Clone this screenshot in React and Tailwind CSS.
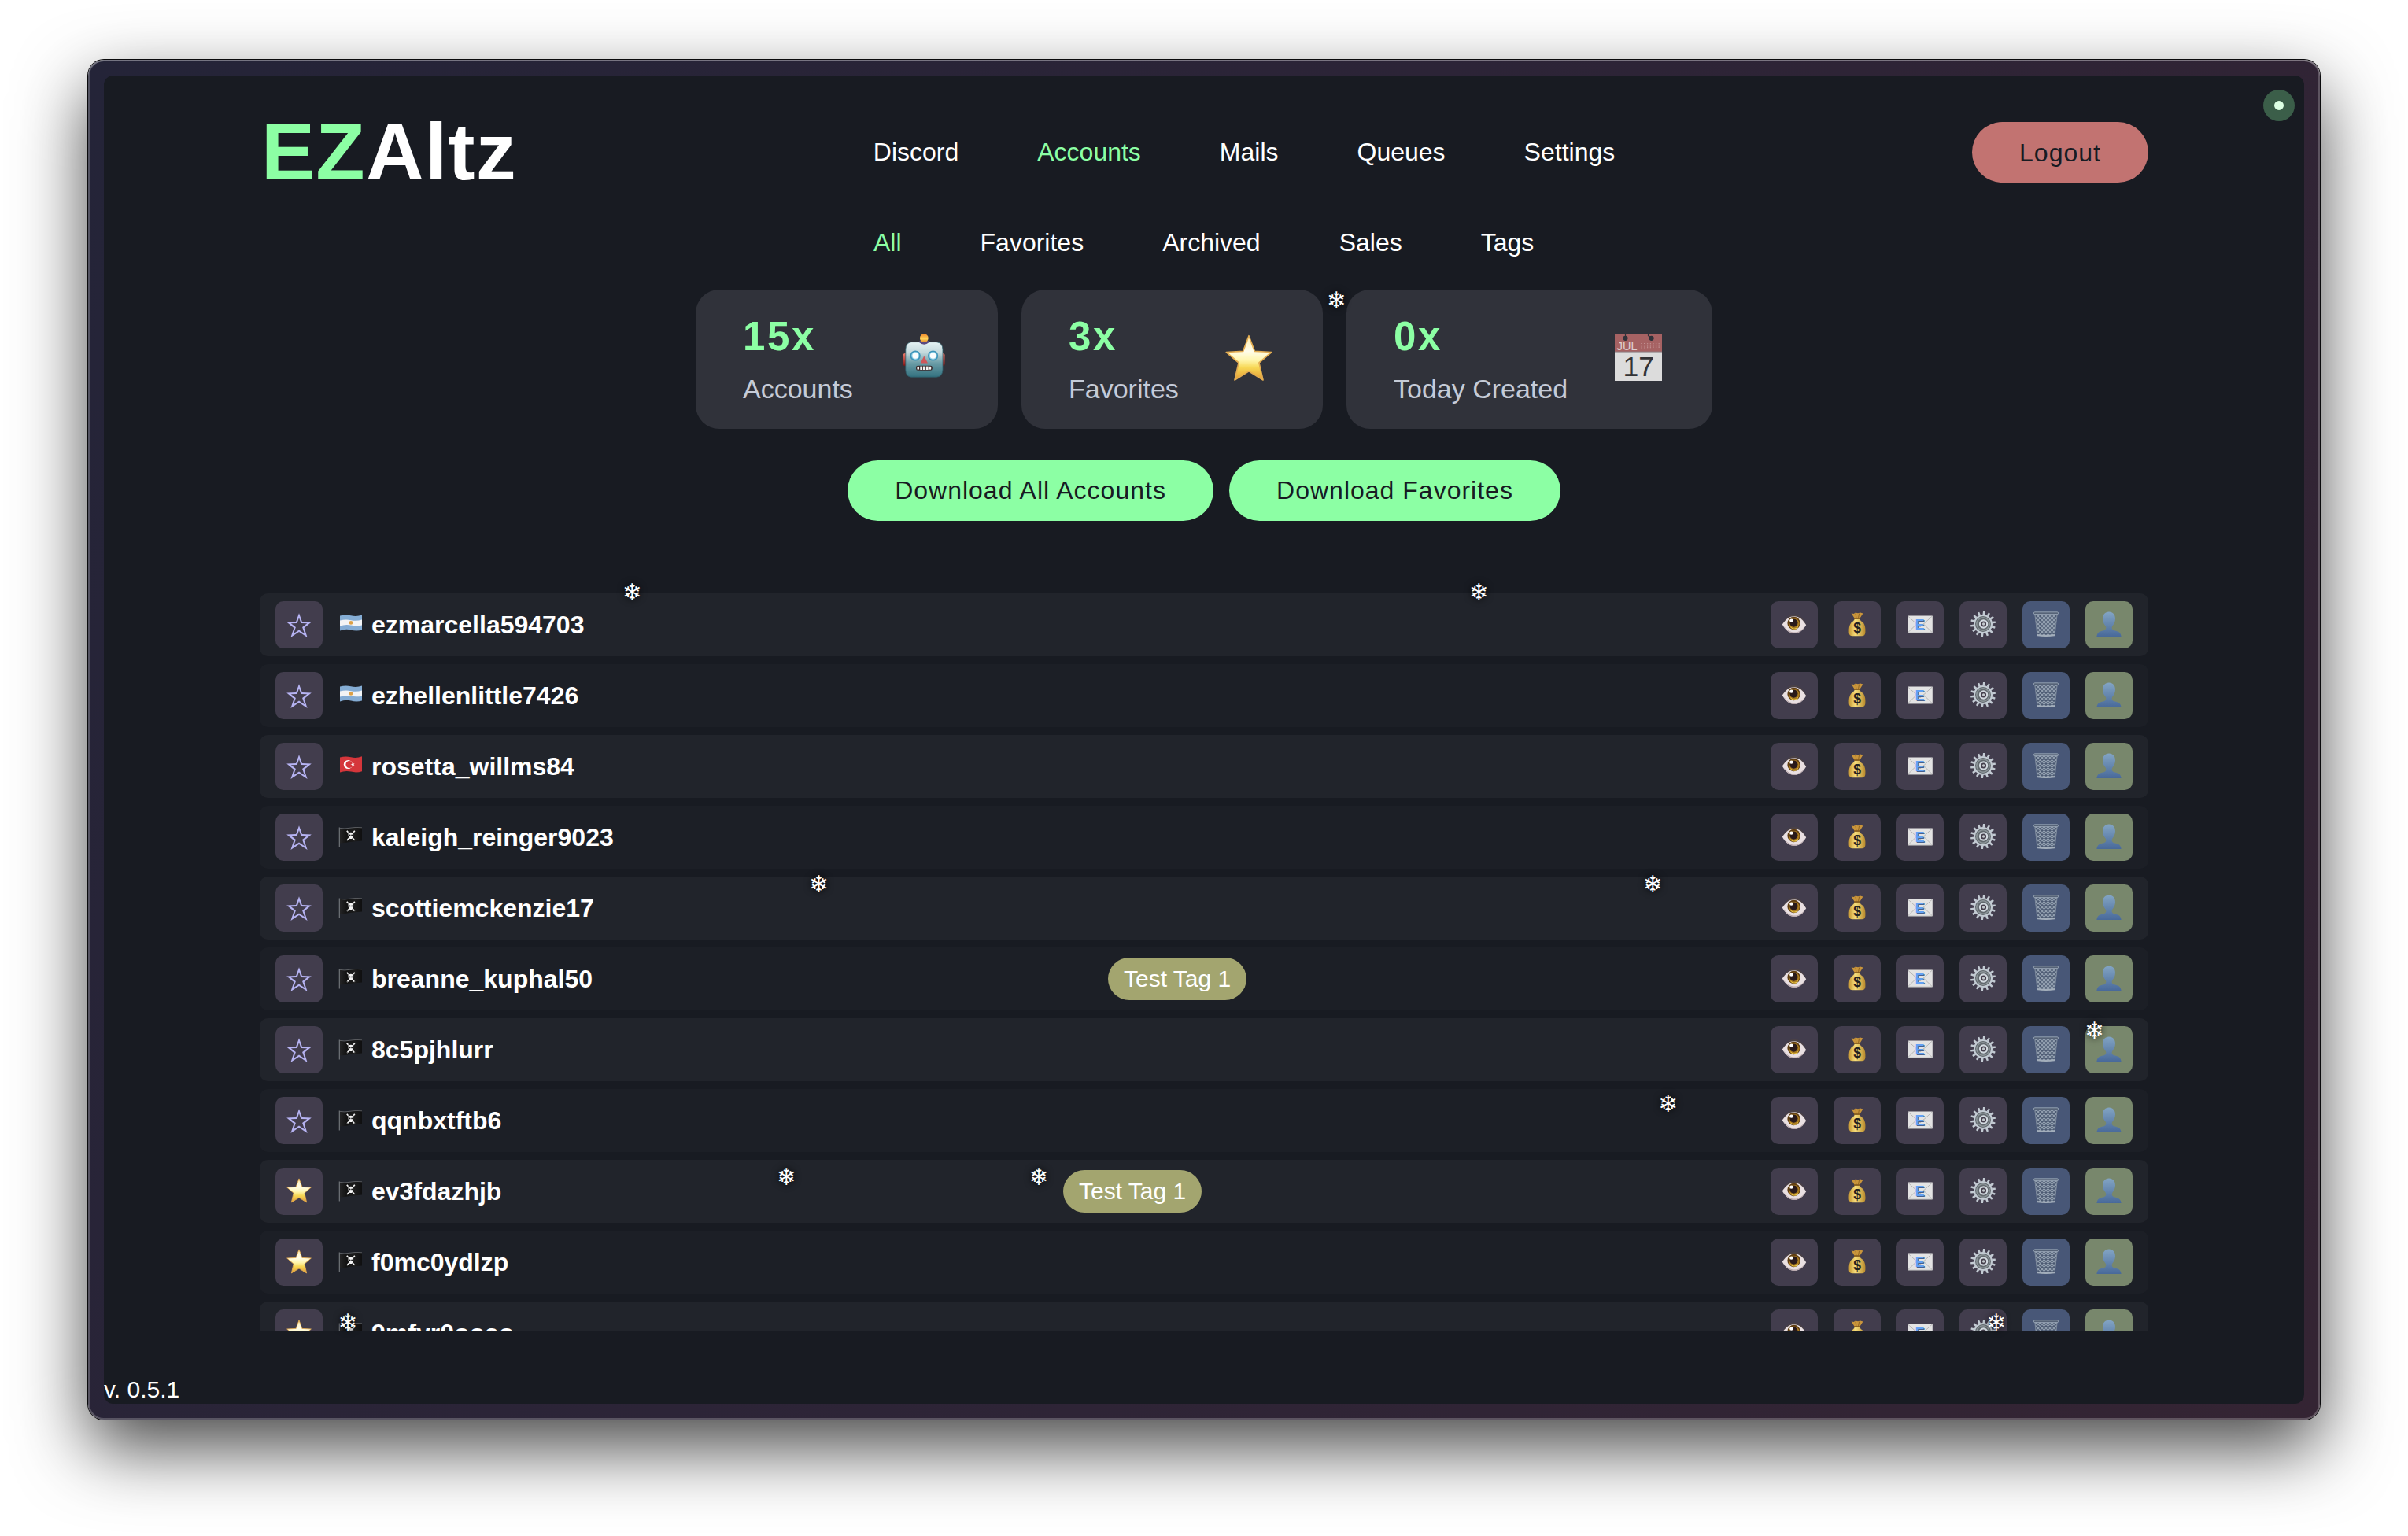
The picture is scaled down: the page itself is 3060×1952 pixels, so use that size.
import React from "react";

function StarIcon({ className, id }) {
  return (
    <svg viewBox="0 0 32 32" className={className}>
      <defs>
        <linearGradient id={id} x1="0" y1="0" x2="0" y2="1">
          <stop offset="0" stopColor="#fdeeb0" />
          <stop offset="0.35" stopColor="#fffdea" />
          <stop offset="0.55" stopColor="#fff6ae" />
          <stop offset="0.72" stopColor="#f7d855" />
          <stop offset="1" stopColor="#e39a33" />
        </linearGradient>
      </defs>
      <polygon
        points="16,0.9 19.9,11.4 31.3,12 22.9,19.2 25.6,30.9 16,25 6.4,30.9 9.1,19.2 0.7,12 12.1,11.4"
        fill={`url(#${id})`}
        stroke="#e3ad52"
        strokeWidth="0.9"
        strokeLinejoin="round"
      />
    </svg>
  );
}

function StarOutline({ className }) {
  return (
    <svg viewBox="0 0 32 32" className={className}>
      <path
        fillRule="evenodd"
        fill="#b6b3f2"
        d="M16 0.2 19.9 11.1 31.8 11.5 22.6 18.9 26.6 30.9 16 23.9 5.4 30.9 9.4 18.9 0.2 11.5 12.1 11.1Z M16 6 13.6 13 5.8 13.2 11.9 18 9 26.2 16 21.5 23 26.2 20.1 18 26.2 13.2 18.4 13Z"
      />
    </svg>
  );
}

function Robot() {
  return (
    <svg viewBox="0 0 60 60" className="size-[60px]">
      <defs>
        <linearGradient id="rb-head" x1="0" y1="0" x2="0" y2="1">
          <stop offset="0" stopColor="#e6f3f4" />
          <stop offset="0.3" stopColor="#c3d9dc" />
          <stop offset="0.6" stopColor="#6b9ca6" />
          <stop offset="1" stopColor="#33717f" />
        </linearGradient>
        <linearGradient id="rb-ball" x1="0" y1="0" x2="0" y2="1">
          <stop offset="0" stopColor="#f08a2c" />
          <stop offset="0.6" stopColor="#ffd45a" />
          <stop offset="1" stopColor="#e08a2c" />
        </linearGradient>
        <linearGradient id="rb-ear" x1="0" y1="0" x2="0" y2="1">
          <stop offset="0" stopColor="#f07a6a" />
          <stop offset="1" stopColor="#7d1414" />
        </linearGradient>
      </defs>
      <rect x="3.6" y="25" width="8" height="16" rx="2.5" fill="url(#rb-ear)" />
      <rect x="48.6" y="25" width="8" height="16" rx="2.5" fill="url(#rb-ear)" />
      <ellipse cx="30.3" cy="11" rx="6.4" ry="3.4" fill="#5b4a80" />
      <rect x="25" y="0.6" width="10.6" height="10" rx="4.6" fill="url(#rb-ball)" />
      <path
        d="M14 10.6H46Q53.8 11.6 54 20V46Q53.6 54.8 46 55.2H14Q7 54.8 6.8 46V20Q7 11.6 14 10.6Z"
        fill="url(#rb-head)"
        stroke="#2f5d69"
        strokeWidth="0.8"
      />
      <path d="M24 11Q30.3 16.5 36.6 11Z" fill="#5b4a80" />
      <circle cx="19.2" cy="28" r="6.6" fill="#3d93b8" />
      <circle cx="19.2" cy="28" r="5" fill="#8fd0e6" />
      <circle cx="19.2" cy="28" r="3.8" fill="#fafdfd" />
      <circle cx="41.6" cy="28" r="6.6" fill="#3d93b8" />
      <circle cx="41.6" cy="28" r="5" fill="#8fd0e6" />
      <circle cx="41.6" cy="28" r="3.8" fill="#fafdfd" />
      <polygon points="30.3,28.5 35,37.6 25.6,37.6" fill="#d0575a" />
      <rect x="20" y="40.8" width="20.8" height="6" rx="2.4" fill="#3a2a2c" />
      <g fill="#f4f4f2">
        <rect x="21.4" y="41.8" width="2.6" height="4" rx="1" />
        <rect x="25.3" y="41.6" width="2.8" height="4.4" />
        <rect x="29" y="41.6" width="2.8" height="4.4" />
        <rect x="32.8" y="41.6" width="2.8" height="4.4" />
        <rect x="36.6" y="41.8" width="2.6" height="4" rx="1" />
      </g>
    </svg>
  );
}

function Calendar() {
  return (
    <svg viewBox="0 0 60 60" className="size-[60px] overflow-visible">
      <rect width="60" height="60" fill="#dcdcdc" />
      <rect width="60" height="23" fill="#a66263" />
      <rect y="22.6" width="60" height="1" fill="#8d8084" />
      <g fill="#30323a">
        <circle cx="13.5" cy="5.8" r="3.1" />
        <circle cx="46.6" cy="5.8" r="3.1" />
      </g>
      <path d="M13.5 0V5M42.5 0V2.6L46.6 5" stroke="#30323a" strokeWidth="1.2" fill="none" />
      <g stroke="#c79a9b" strokeWidth="1.3" strokeDasharray="1.1 1.1">
        <path d="M34 12V20.5M37.8 12V20.5M41.6 10V20.5M45.4 10V20.5M49 10V18.5M52.6 10V18.5M56.2 10V18.5" />
      </g>
      <text x="2.8" y="20.8" fontSize="14.5" fill="#dfcfd0" fontFamily="Liberation Sans, sans-serif">
        JUL
      </text>
      <text x="10.4" y="54" fontSize="35.5" fill="#333436" fontFamily="Liberation Sans, sans-serif">
        17
      </text>
    </svg>
  );
}

function Eye() {
  return (
    <svg viewBox="0 0 32 32" className="size-8">
      <path d="M1 15.4C6 7 10 3.8 16.4 3.8C23 3.8 27 8 31.2 16.8L28 17C20 9 10 9 3 17Z" fill="#4a4146" />
      <path d="M0.8 16.4C6 9 10 6.2 16 6.2C22.4 6.2 26.4 10 31.2 17.2C27 24.6 22 27.8 16.6 27.8C10 27.8 4.6 23.6 0.8 16.4Z" fill="#e9e0e2" />
      <path d="M2.4 17.4C6 23.4 11 26.6 16.6 26.6C21.6 26.6 26 24 30 18C26 25.2 21.6 27.8 16.6 27.8C10.6 27.8 5.6 24 2.4 17.4Z" fill="#b9a6aa" />
      <circle cx="15.6" cy="15" r="8.2" fill="#5e3c10" />
      <circle cx="15.8" cy="15.6" r="6.9" fill="#a97a20" />
      <path d="M11 19Q16 24.6 21.4 18.4Q20 22.6 16 22.6Q12.4 22.6 11 19Z" fill="#f0cf4a" />
      <circle cx="15.4" cy="14.6" r="5.1" fill="#2a1a1a" />
      <circle cx="12.4" cy="11.6" r="2.2" fill="#fff" />
    </svg>
  );
}

function MoneyBag() {
  return (
    <svg viewBox="0 0 32 32" className="size-8">
      <defs>
        <linearGradient id="bag" x1="0" y1="0" x2="1" y2="0">
          <stop offset="0" stopColor="#c99a35" />
          <stop offset="0.4" stopColor="#f7df7d" />
          <stop offset="1" stopColor="#b98b2c" />
        </linearGradient>
      </defs>
      <path d="M8.6 2.2 11.5 3 14 1.4 17 2.2 20 1.4 23.4 2.6 19 9.4H13Z" fill="#c9953b" />
      <path d="M14 2.6 15 9M18.6 2.6 17.4 9" stroke="#8a6020" strokeWidth="0.9" />
      <path d="M13 9.4H19Q20 12 24 14.4Q27 19 26.4 27Q26 31.2 22 31.2H10Q5.8 31.2 5.6 27Q5 19 8.2 14.4Q12 12 13 9.4Z" fill="url(#bag)" />
      <path d="M12 9H20" stroke="#8a5f1f" strokeWidth="1.8" />
      <text x="16" y="27.4" fontSize="17.5" fontWeight="700" textAnchor="middle" fill="#222" fontFamily="Liberation Sans, sans-serif">
        $
      </text>
    </svg>
  );
}

function Envelope() {
  return (
    <svg viewBox="0 0 32 32" className="size-8">
      <rect x="0.2" y="5.6" width="31.6" height="21.6" rx="0.8" fill="#e3e3e3" />
      <path d="M0.6 26.8 12 15.6M31.4 26.8 20 15.6M0.6 6 16 20 31.4 6" stroke="#b5b5b5" strokeWidth="1" fill="none" />
      <path d="M0.6 27H31.4" stroke="#bdbdbd" strokeWidth="0.8" />
      <text x="16.6" y="23.6" fontSize="18" fontWeight="700" textAnchor="middle" fill="#46608c" fontFamily="Liberation Sans, sans-serif">
        E
      </text>
      <text x="15.6" y="22.6" fontSize="18" fontWeight="700" textAnchor="middle" fill="#62a0f4" fontFamily="Liberation Sans, sans-serif">
        E
      </text>
    </svg>
  );
}

const TEETH = Array.from({ length: 14 }, (_, i) => (i * 360) / 14);

function Gear() {
  return (
    <svg viewBox="0 0 32 32" className="size-8">
      <g fill="#c3cbd3">
        {TEETH.map((a) => (
          <path key={a} d="M14.6 4.4 14.9 0H17.2L17.4 4.4Z" transform={`rotate(${a + 4} 16 16)`} />
        ))}
      </g>
      <circle cx="16" cy="16" r="11" fill="#62696e" stroke="#c3cbd3" strokeWidth="2" />
      <circle cx="16" cy="16" r="8.2" fill="none" stroke="#8d969a" strokeWidth="1.6" />
      <circle cx="16.6" cy="16" r="4.6" fill="#453f4c" stroke="#d3dae0" strokeWidth="2.2" />
      <circle cx="16.6" cy="16" r="1.7" fill="#c2c8cc" />
    </svg>
  );
}

function Trash() {
  return (
    <svg viewBox="0 0 32 32" className="size-8">
      <defs>
        <clipPath id="basket">
          <path d="M1.4 2H30.6L27 30.6Q16 32.4 5 30.6Z" />
        </clipPath>
      </defs>
      <g clipPath="url(#basket)">
        <rect width="32" height="32" fill="#4c5a72" />
        <path
          d="M-20 0 12 32M-15 0 17 32M-10 0 22 32M-5 0 27 32M0 0 32 32M5 0 37 32M10 0 42 32M15 0 47 32M20 0 52 32M25 0 57 32M52 0 20 32M47 0 15 32M42 0 10 32M37 0 5 32M32 0 0 32M27 0 -5 32M22 0 -10 32M17 0 -15 32M12 0 -20 32M7 0 -25 32"
          stroke="#93a0b0"
          strokeWidth="1.1"
        />
      </g>
      <path d="M1.8 3 5 30.6M30.2 3 27 30.6" stroke="#7d8a9c" strokeWidth="1" />
      <rect x="0.4" y="0.8" width="31.2" height="2.8" rx="1.4" fill="#566377" stroke="#9ba8b8" strokeWidth="0.9" />
      <path d="M4.8 29Q16 30.8 27.2 29L27 31.2Q16 32.6 5 31.2Z" fill="#a3aebb" />
    </svg>
  );
}

function Person() {
  return (
    <svg viewBox="0 0 32 32" className="size-8">
      <defs>
        <linearGradient id="person" x1="0" y1="0" x2="0" y2="1">
          <stop offset="0" stopColor="#83a5c4" />
          <stop offset="1" stopColor="#48699a" />
        </linearGradient>
      </defs>
      <path
        d="M16 0.4C21 0.4 24 4 24 9.4C24 13.4 22 16.2 20.4 18.4C19 20.6 19.6 23.2 22.4 24.2C26.6 25 31 25.8 31.6 32H0.4C1 25.8 5.4 25 9.6 24.2C12.4 23.2 13 20.6 11.6 18.4C10 16.2 8 13.4 8 9.4C8 4 11 0.4 16 0.4Z"
        fill="url(#person)"
      />
    </svg>
  );
}

function FlagArgentina() {
  return (
    <svg viewBox="0 0 30 26" className="h-[26px] w-[30px]">
      <path d="M2 1.6Q9 -0.6 16 1.2T30 0.6V19.6Q23 21.6 16 19.6T2 20.6Z" fill="#84acd4" />
      <path d="M2 7.6Q9 5.8 16 7.2T30 6.6V13.4Q23 15.2 16 13.6T2 14.6Z" fill="#f3f4f5" />
      <circle cx="16" cy="10.4" r="2.3" fill="#dba047" />
    </svg>
  );
}

function FlagTurkey() {
  return (
    <svg viewBox="0 0 30 26" className="h-[26px] w-[30px]">
      <path d="M2 1.6Q9 -0.6 16 1.2T30 0.2V19.2Q23 21.4 16 19.6T2 20.6Z" fill="#d5363b" />
      <circle cx="12.4" cy="10.5" r="5.6" fill="#fff" />
      <circle cx="13.9" cy="10.5" r="4.5" fill="#d5363b" />
      <polygon points="15.4,10.4 17.4,9.9 17.8,8 18.8,9.6 20.6,9.2 19.4,10.5 20.4,12 18.7,11.4 17.4,12.8 17.4,11" fill="#fff" />
    </svg>
  );
}

function FlagPirate() {
  return (
    <svg viewBox="0 0 30 26" className="h-[26px] w-[30px]">
      <defs>
        <linearGradient id="pirate" x1="0" y1="0" x2="1" y2="0">
          <stop offset="0" stopColor="#242425" />
          <stop offset="0.3" stopColor="#131313" />
          <stop offset="0.7" stopColor="#1c1c1c" />
          <stop offset="1" stopColor="#0f0f10" />
        </linearGradient>
      </defs>
      <path d="M1.8 1.6Q8 2.8 15 1.4T30 0.8V17.4Q22 18 15 19T1.8 20.6Z" fill="url(#pirate)" />
      <path d="M1.8 1.4Q8 2.6 15 1.2T30 0.8" stroke="#6a6c70" strokeWidth="0.8" fill="none" />
      <path d="M1.3 0.4V25.4" stroke="#777b80" strokeWidth="1.1" />
      <path d="M10.8 4.8 20.6 17M20.8 4.8 11 17.2" stroke="#f2f2f2" strokeWidth="1.7" strokeDasharray="2.6 0.5" />
      <circle cx="15.8" cy="10" r="3.3" fill="#f4f4f4" />
      <rect x="14.1" y="12" width="3.4" height="3" fill="#f4f4f4" />
      <circle cx="14.6" cy="10.4" r="0.9" fill="#111" />
      <circle cx="17.1" cy="10.4" r="0.9" fill="#111" />
    </svg>
  );
}

const FLAGS = { ar: FlagArgentina, tr: FlagTurkey, pirate: FlagPirate };

const ACCOUNTS = [
  { name: "ezmarcella594703", flag: "ar" },
  { name: "ezhellenlittle7426", flag: "ar" },
  { name: "rosetta_willms84", flag: "tr" },
  { name: "kaleigh_reinger9023", flag: "pirate" },
  { name: "scottiemckenzie17", flag: "pirate" },
  { name: "breanne_kuphal50", flag: "pirate", tag: "Test Tag 1", lead: "w-[1058px]" },
  { name: "8c5pjhlurr", flag: "pirate" },
  { name: "qqnbxtftb6", flag: "pirate" },
  { name: "ev3fdazhjb", flag: "pirate", fav: true, tag: "Test Tag 1", lead: "w-[1001px]" },
  { name: "f0mc0ydlzp", flag: "pirate", fav: true },
  { name: "9mfyr0ooao", flag: "pirate", fav: true },
];

const ACTIONS = [
  { Icon: Eye, bg: "bg-[#423d4d]" },
  { Icon: MoneyBag, bg: "bg-[#423d4d]" },
  { Icon: Envelope, bg: "bg-[#423d4d]" },
  { Icon: Gear, bg: "bg-[#423d4d]" },
  { Icon: Trash, bg: "bg-[#485777]" },
  { Icon: Person, bg: "bg-[#78876c]" },
];

function AccountRow({ account, index }) {
  const Flag = FLAGS[account.flag];
  return (
    <div
      className={`flex h-20 shrink-0 items-center rounded-[10px] px-5 ${
        index % 2 === 0 ? "bg-[#21242b]" : "bg-[#1c1f26]"
      }`}
    >
      <div className={`flex shrink-0 items-center ${account.lead || ""}`}>
        <button className="flex size-[60px] items-center justify-center rounded-[10px] bg-[#423d4d]">
          {account.fav ? (
            <StarIcon className="mb-[2px] size-8" id={`star-${index}`} />
          ) : (
            <StarOutline className="mt-[2px] size-8" />
          )}
        </button>
        <span className="ml-5 flex pb-px">
          <Flag />
        </span>
        <span className="ml-3 pb-px text-[32px] font-bold leading-[38px] text-white">{account.name}</span>
      </div>
      {account.tag && (
        <span className="flex h-[54px] items-center rounded-[27px] bg-[#a3a56f] px-5 pb-px text-[30px] leading-[34px] text-white">
          {account.tag}
        </span>
      )}
      <div className="ml-auto flex gap-5">
        {ACTIONS.map(({ Icon, bg }, i) => (
          <button key={i} className={`flex size-[60px] items-center justify-center rounded-[10px] pb-[2px] ${bg}`}>
            <Icon />
          </button>
        ))}
      </div>
    </div>
  );
}

function StatCard({ value, label, icon, width }) {
  return (
    <div className={`flex h-[177px] items-center justify-between rounded-[30px] bg-[#30323a] pl-[60px] pr-16 ${width}`}>
      <div className="flex flex-col whitespace-nowrap">
        <span className="text-[51px] font-bold leading-[58px] tracking-[2.6px] text-[#8cffa4]">{value}</span>
        <span className="mt-[17px] text-[34px] leading-[40px] text-[#c5cbd7]">{label}</span>
      </div>
      <span className="mb-[5px]">{icon}</span>
    </div>
  );
}

const SNOW = [
  [1698.5, 381.5],
  [803.5, 752.5],
  [1879.5, 752.5],
  [1040.8, 1123.5],
  [2100.7, 1123.5],
  [2661.8, 1309.7],
  [2120, 1402.5],
  [999.6, 1495.7],
  [1320.4, 1495.7],
  [442.3, 1680.7],
  [2537.2, 1680.7],
];

function Nav({ items, active }) {
  return (
    <nav className="flex gap-[100px] text-[32px] leading-[37px] text-white">
      {items.map((item) => (
        <a key={item} className={item === active ? "text-[#8cffa4]" : ""}>
          {item}
        </a>
      ))}
    </nav>
  );
}

export default function App() {
  return (
    <div className="relative flex h-[1952px] w-[3060px] justify-center overflow-hidden bg-white pt-[76px] font-['Liberation_Sans',Arial,sans-serif]">
      <div className="h-[1728px] w-[2836px] rounded-[20px] bg-[linear-gradient(120deg,#242438_0%,#2c2437_45%,#342433_100%)] p-5 shadow-[inset_0_0_0_2px_rgba(255,255,255,0.22),inset_0_2px_0_0_rgba(255,255,255,0.2),0_0_0_1px_#0a0a0c,0_36px_90px_rgba(0,0,0,0.72)]">
        <div className="relative flex h-full flex-col items-center overflow-hidden rounded-[12px] bg-[#181b22] pt-[59px]">
          <header className="flex h-[77px] w-[2400px] items-center justify-between">
            <div className="w-[326px] whitespace-nowrap pl-[2px] text-[102px] font-bold leading-[77px] tracking-[1.3px] text-white">
              <span className="text-[#8cffa4]">EZ</span>Altz
            </div>
            <Nav items={["Discord", "Accounts", "Mails", "Queues", "Settings"]} active="Accounts" />
            <button className="flex h-[77px] w-[224px] items-center justify-center rounded-full bg-[#c27371] text-[32px] tracking-[1px] text-[#181b22]">
              Logout
            </button>
          </header>

          <div className="mt-[58px] w-[2400px] pl-[780px]">
            <Nav items={["All", "Favorites", "Archived", "Sales", "Tags"]} active="All" />
          </div>

          <section className="mt-[41px] flex gap-[30px]">
            <StatCard value="15x" label="Accounts" icon={<Robot />} width="w-[384px]" />
            <StatCard
              value="3x"
              label="Favorites"
              icon={<StarIcon className="mt-[2px] size-[60px]" id="star-card" />}
              width="w-[383px]"
            />
            <StatCard value="0x" label="Today Created" icon={<Calendar />} width="w-[465px]" />
          </section>

          <div className="mt-10 flex gap-5 text-[32px] tracking-[1px] text-[#181b22]">
            <button className="flex h-[77px] w-[465px] items-center justify-center whitespace-nowrap rounded-full bg-[#8cffa4] pb-[2px]">
              Download All Accounts
            </button>
            <button className="flex h-[77px] w-[421px] items-center justify-center whitespace-nowrap rounded-full bg-[#8cffa4] pb-[2px]">
              Download Favorites
            </button>
          </div>

          <main className="mt-[92px] flex h-[938px] w-[2400px] flex-col gap-[10px] overflow-hidden">
            {ACCOUNTS.map((account, i) => (
              <AccountRow key={account.name} account={account} index={i} />
            ))}
          </main>

          <div className="absolute right-3 top-[18px] flex size-10 items-center justify-center rounded-full bg-[#3b5e49]">
            <span className="size-3 rounded-full bg-[#dcffe3]" />
          </div>
          <div className="absolute bottom-px left-0 text-[30px] leading-[34px] text-white">v. 0.5.1</div>
        </div>
      </div>

      {SNOW.map(([x, y], i) => (
        <span
          key={i}
          className="absolute flex size-8 items-center justify-center font-['DejaVu_Sans',sans-serif] text-[30px] leading-none text-white [text-shadow:0_0_10px_#000]"
          style={{ left: x - 16, top: y - 16 }}
        >
          ❄
        </span>
      ))}
    </div>
  );
}
